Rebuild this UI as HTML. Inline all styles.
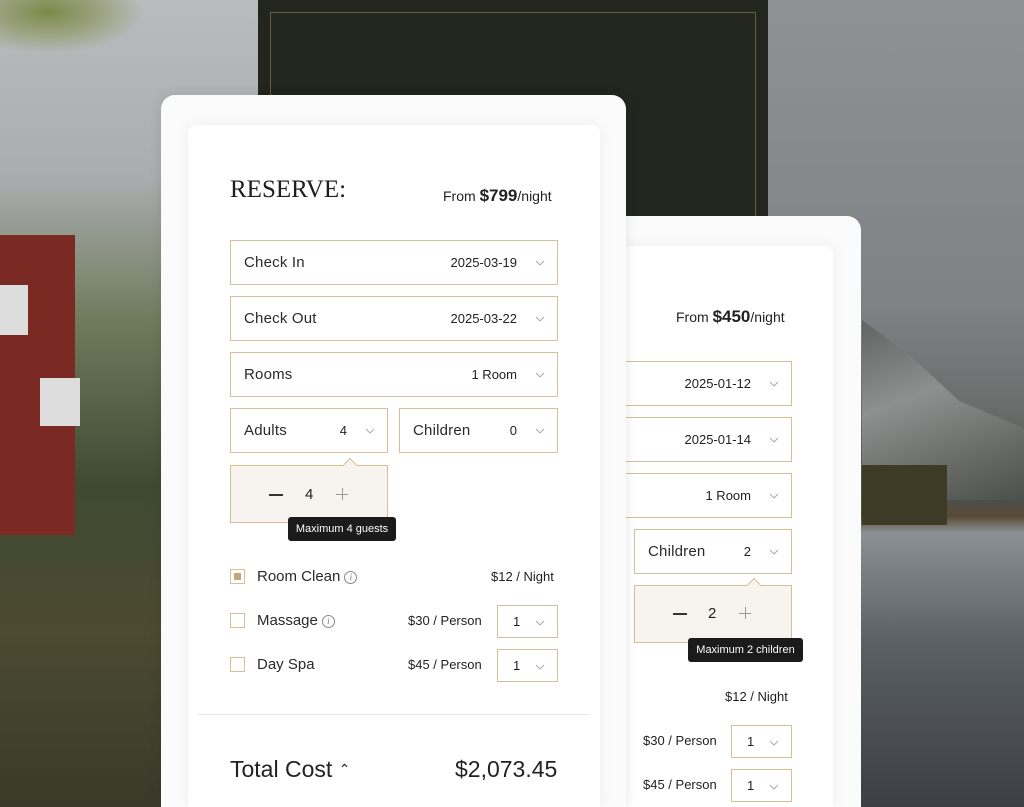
<!DOCTYPE html>
<html><head><meta charset="utf-8">
<style>
*{box-sizing:border-box;margin:0;padding:0}
html,body{width:1024px;height:807px;overflow:hidden}
body{position:relative;font-family:"Liberation Sans",sans-serif;color:#222;background:#6a6e70}
.abs{position:absolute}
.bgl{left:0;top:0;width:300px;height:807px;background:linear-gradient(180deg,#b9bcbd 0%,#a9adae 22%,#6f7a5c 40%,#3f4a33 60%,#4c4a30 78%,#3a3a2a 100%)}
.house{left:0;top:235px;width:75px;height:300px;background:#7a2a22}
.bgr{left:760px;top:0;width:264px;height:807px;background:linear-gradient(180deg,#8e9295 0%,#7e8285 38%,#6a6e6c 50%,#4b4f4c 62%,#5a4a35 64%,#8a9095 66%,#5a5f63 80%,#3b3f43 100%)}
.mtn{left:862px;top:320px;width:162px;height:180px;background:linear-gradient(160deg,#5f6362,#8d908e 40%,#4b504c);clip-path:polygon(0 0,30% 20%,60% 45%,100% 60%,100% 100%,0 100%)}
.dark{left:258px;top:0;width:510px;height:216px;background:#23251f}
.dark:after{content:"";position:absolute;left:12px;top:12px;right:12px;bottom:-10px;border:1px solid #6b5c3d}
.outer{background:#fbfbfb;border-radius:14px 14px 0 0}
.inner{background:#fff;border-radius:8px 8px 0 0;box-shadow:0 0 14px rgba(0,0,0,.06)}
.f{position:absolute;border:1.5px solid #d6bf98;background:#fff;height:45px;font-size:15px}
.f .l{position:absolute;left:13px;top:13px;color:#2a2a2a;letter-spacing:.2px}
.f .v{position:absolute;right:40px;top:14px;font-size:13px;color:#222}
.chev{position:absolute;right:12px;top:19px;width:10px;height:6px}
.pop{position:absolute;border:1.5px solid #d6bf98;background:#f7f4f0}
.pop .arr{position:absolute;top:-6px;width:10px;height:10px;background:#f7f4f0;border-left:1.5px solid #d6bf98;border-top:1.5px solid #d6bf98;transform:rotate(45deg)}
.tip{position:absolute;background:#1b1b1b;color:#fff;font-size:11px;border-radius:3px;text-align:center;line-height:24px;height:24px}
.cb{position:absolute;width:15px;height:15px;border:1.5px solid #d6bf98}
.t14{position:absolute;font-size:15px;color:#2a2a2a}
.t13{position:absolute;font-size:13px;color:#222}
.sel{position:absolute;border:1.5px solid #d6bf98;width:61px;height:33px;font-size:13px}
.sel span{position:absolute;left:15px;top:8px}
.sel svg{position:absolute;right:12px;top:14px}
.info{display:inline-block;width:13px;height:13px;border:1px solid #888;border-radius:50%;font-size:9px;text-align:center;line-height:11px;color:#777;font-style:italic;vertical-align:1px;margin-left:4px;font-family:"Liberation Serif",serif}
</style></head><body>
<div class="abs bgl"></div>
<div class="abs house"></div>
<div class="abs" style="left:0;top:285px;width:28px;height:50px;background:#ddd"></div>
<div class="abs" style="left:40px;top:378px;width:40px;height:48px;background:#ddd"></div>
<div class="abs" style="left:0;top:0;width:160px;height:60px;background:radial-gradient(ellipse at 30% 20%,#7b8a4a 0,#9aa07a 30%,transparent 60%)"></div>
<div class="abs bgr"></div>
<div class="abs mtn"></div>
<div class="abs" style="left:862px;top:465px;width:85px;height:60px;background:#3d3a26"></div>
<div class="abs dark"></div>

<!-- back card -->
<div class="abs outer" style="left:560px;top:216px;width:301px;height:591px"></div>
<div class="abs inner" style="left:560px;top:246px;width:273px;height:561px"></div>
<div class="abs" style="left:676px;top:307px;font-size:14px">From <b style="font-size:17px">$450</b>/night</div>
<div class="f" style="left:600px;top:361px;width:192px;border-left:none"><span class="v">2025-01-12</span><svg class="chev" viewBox="0 0 10 6"><path d="M1 1l4 4 4-4" fill="none" stroke="#aaa"/></svg></div>
<div class="f" style="left:600px;top:417px;width:192px;border-left:none"><span class="v">2025-01-14</span><svg class="chev" viewBox="0 0 10 6"><path d="M1 1l4 4 4-4" fill="none" stroke="#aaa"/></svg></div>
<div class="f" style="left:600px;top:473px;width:192px;border-left:none"><span class="v">1 Room</span><svg class="chev" viewBox="0 0 10 6"><path d="M1 1l4 4 4-4" fill="none" stroke="#aaa"/></svg></div>
<div class="f" style="left:634px;top:529px;width:158px"><span class="l">Children</span><span class="v">2</span><svg class="chev" viewBox="0 0 10 6"><path d="M1 1l4 4 4-4" fill="none" stroke="#aaa"/></svg></div>
<div class="pop" style="left:634px;top:585px;width:158px;height:58px"><div class="arr" style="left:114px"></div>
<div class="abs" style="left:38px;top:27px;width:14px;height:1.5px;background:#333"></div>
<div class="abs" style="left:73px;top:19px;font-size:15px">2</div>
<div class="abs" style="left:104px;top:27px;width:12px;height:1px;background:#999"></div><div class="abs" style="left:110px;top:21px;width:1px;height:12px;background:#999"></div></div>
<div class="tip" style="left:688px;top:638px;width:115px">Maximum 2 children</div>
<div class="t13" style="left:725px;top:689px">$12 / Night</div>
<div class="t13" style="left:643px;top:733px">$30 / Person</div>
<div class="sel" style="left:731px;top:725px"><span>1</span><svg width="10" height="6"><path d="M1 1l4 4 4-4" fill="none" stroke="#aaa"/></svg></div>
<div class="t13" style="left:643px;top:777px">$45 / Person</div>
<div class="sel" style="left:731px;top:769px"><span>1</span><svg width="10" height="6"><path d="M1 1l4 4 4-4" fill="none" stroke="#aaa"/></svg></div>

<!-- front card -->
<div class="abs outer" style="left:161px;top:95px;width:465px;height:712px;box-shadow:0 0 12px rgba(0,0,0,.1)"></div>
<div class="abs inner" style="left:188px;top:125px;width:412px;height:682px"></div>
<div class="abs" style="left:230px;top:176px;font-size:25px;font-family:'Liberation Serif',serif;color:#1e1e1e">RESERVE:</div>
<div class="abs" style="left:443px;top:186px;font-size:14px">From <b style="font-size:17px">$799</b>/night</div>
<div class="f" style="left:230px;top:240px;width:328px"><span class="l">Check In</span><span class="v">2025-03-19</span><svg class="chev" viewBox="0 0 10 6"><path d="M1 1l4 4 4-4" fill="none" stroke="#aaa"/></svg></div>
<div class="f" style="left:230px;top:296px;width:328px"><span class="l">Check Out</span><span class="v">2025-03-22</span><svg class="chev" viewBox="0 0 10 6"><path d="M1 1l4 4 4-4" fill="none" stroke="#aaa"/></svg></div>
<div class="f" style="left:230px;top:352px;width:328px"><span class="l">Rooms</span><span class="v">1 Room</span><svg class="chev" viewBox="0 0 10 6"><path d="M1 1l4 4 4-4" fill="none" stroke="#aaa"/></svg></div>
<div class="f" style="left:230px;top:408px;width:158px"><span class="l">Adults</span><span class="v">4</span><svg class="chev" viewBox="0 0 10 6"><path d="M1 1l4 4 4-4" fill="none" stroke="#aaa"/></svg></div>
<div class="f" style="left:399px;top:408px;width:159px"><span class="l">Children</span><span class="v">0</span><svg class="chev" viewBox="0 0 10 6"><path d="M1 1l4 4 4-4" fill="none" stroke="#aaa"/></svg></div>
<div class="pop" style="left:230px;top:465px;width:158px;height:58px"><div class="arr" style="left:114px"></div>
<div class="abs" style="left:38px;top:28px;width:14px;height:1.5px;background:#333"></div>
<div class="abs" style="left:74px;top:20px;font-size:15px">4</div>
<div class="abs" style="left:105px;top:28px;width:12px;height:1px;background:#999"></div><div class="abs" style="left:111px;top:22px;width:1px;height:12px;background:#999"></div></div>
<div class="tip" style="left:288px;top:517px;width:108px">Maximum 4 guests</div>

<div class="cb" style="left:230px;top:569px"><div class="abs" style="left:3px;top:3px;width:7px;height:7px;background:#c2a77c"></div></div>
<div class="t14" style="left:257px;top:568px">Room Clean<span class="info">i</span></div>
<div class="t13" style="left:491px;top:569px">$12 / Night</div>
<div class="cb" style="left:230px;top:613px"></div>
<div class="t14" style="left:257px;top:612px">Massage<span class="info">i</span></div>
<div class="t13" style="left:408px;top:613px">$30 / Person</div>
<div class="sel" style="left:497px;top:605px"><span>1</span><svg width="10" height="6"><path d="M1 1l4 4 4-4" fill="none" stroke="#aaa"/></svg></div>
<div class="cb" style="left:230px;top:657px"></div>
<div class="t14" style="left:257px;top:656px">Day Spa</div>
<div class="t13" style="left:408px;top:657px">$45 / Person</div>
<div class="sel" style="left:497px;top:649px"><span>1</span><svg width="10" height="6"><path d="M1 1l4 4 4-4" fill="none" stroke="#aaa"/></svg></div>
<div class="abs" style="left:198px;top:714px;width:392px;height:1px;background:#e8e8e8"></div>
<div class="abs" style="left:230px;top:756px;font-size:23px;color:#222">Total Cost <span style="font-size:14px;vertical-align:3px">&#8963;</span></div>
<div class="abs" style="left:455px;top:756px;font-size:23px;color:#222">$2,073.45</div>
</body></html>
